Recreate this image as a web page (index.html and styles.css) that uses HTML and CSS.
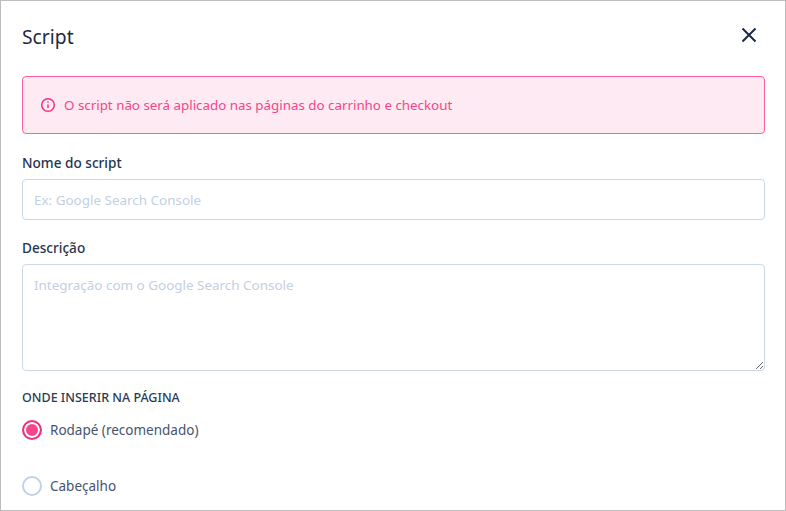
FILE: index.html
```html
<!DOCTYPE html>
<html lang="en">

<head>
    <meta charset="UTF-8">
    <meta name="viewport" content="width=device-width, initial-scale=1.0">
    <title>Script</title>
    <link rel="stylesheet" href="styles.css">
</head>

<body>
    <div class="modal">
        <div class="modal-header">
            <h1>Script</h1>
            <svg class="close" width="18" height="18" viewBox="0 0 18 18">
                <path d="M2.5 2.5L15.5 15.5M15.5 2.5L2.5 15.5" />
            </svg>
        </div>

        <div class="alert">
            <svg width="16" height="16" viewBox="0 0 16 16">
                <circle cx="8" cy="8" r="6.3" />
                <path d="M8 7.5V11M8 4.6V5.8" />
            </svg>
            <span>O script não será aplicado nas páginas do carrinho e checkout</span>
        </div>

        <label class="field-label">Nome do script</label>
        <input class="field" type="text" placeholder="Ex: Google Search Console">

        <label class="field-label desc-label">Descrição</label>
        <textarea class="field area" placeholder="Integração com o Google Search Console"></textarea>

        <div class="section-label">ONDE INSERIR NA PÁGINA</div>
        <div class="radio-row">
            <span class="radio checked"></span>
            <span>Rodapé (recomendado)</span>
        </div>
        <div class="radio-row second">
            <span class="radio"></span>
            <span>Cabeçalho</span>
        </div>
    </div>
</body>

</html>
```
FILE: styles.css
```css
* {
    box-sizing: border-box;
}

body {
    margin: 0;
    font-family: "Noto Sans", sans-serif;
    color: #1c2b45;
}

.modal {
    height: 511px;
    padding: 0 20px 0 21px;
    border: 1px solid #bdbdbd;
    overflow: hidden;
    background-color: white;
}

.modal-header {
    display: flex;
    justify-content: space-between;
    align-items: center;
    height: 75px;
    padding-bottom: 5px;
}

.modal-header h1 {
    margin: 0;
    font-size: 19.3px;
    font-weight: 400;
}

.close {
    margin-right: 7px;
    margin-top: -3px;
}

.close path {
    fill: none;
    stroke: #1c2b45;
    stroke-width: 2;
}

.alert {
    display: flex;
    align-items: center;
    gap: 8px;
    height: 58px;
    padding-left: 17px;
    border: 1px solid #ff5f9c;
    border-radius: 4px;
    background-color: #fdeaf2;
    color: #f5468a;
    font-size: 13.35px;
}

.alert span {
    margin-top: -1px;
}

.alert svg {
    margin-top: -1px;
    fill: none;
    stroke: #f0327e;
    stroke-width: 1.5;
}

.field-label {
    display: block;
    margin-top: 19px;
    height: 26px;
    font-size: 13.6px;
    font-weight: 500;
    line-height: 20px;
    color: #26354f;
}

.desc-label {
    margin-top: 18px;
    height: 26px;
}

.field {
    display: block;
    width: 100%;
    height: 41px;
    margin: 0;
    padding: 0 11px;
    border: 1px solid #cbd8e6;
    border-radius: 4px;
    outline: none;
    font-family: inherit;
    font-size: 13.45px;
}

.field::placeholder {
    color: #c3d0e2;
    opacity: 1;
}

.area {
    height: 107px;
    padding-top: 10px;
    line-height: 20px;
}

.section-label {
    margin-top: 18px;
    font-size: 12.5px;
    font-weight: 500;
    line-height: 18px;
    color: #2c3b55;
}

.radio-row {
    display: flex;
    align-items: center;
    gap: 8px;
    height: 20px;
    margin-top: 13px;
    font-size: 13.5px;
    color: #45546d;
}

.radio-row.second {
    margin-top: 36px;
}

.radio {
    width: 20px;
    height: 20px;
    border: 2px solid #c3d2e2;
    border-radius: 50%;
}

.radio.checked {
    border-color: #f0327e;
    background-color: #f5468a;
    box-shadow: inset 0 0 0 2px white;
}
```
